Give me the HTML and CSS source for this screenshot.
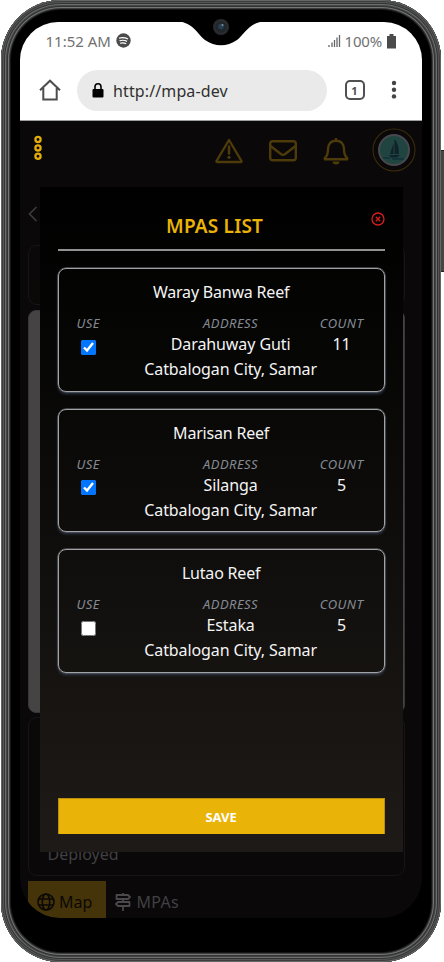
FILE: index.html
```html
<!DOCTYPE html>
<html lang="en">
<head>
<meta charset="utf-8">
<title>MPAS List</title>
<link rel="stylesheet" href="styles.css">
</head>
<body>
<div class="key"></div>
<div class="phone">
  <svg class="notch" width="94" height="25" viewBox="0 0 94 25"><path d="M0 0C19 0 23 13 31 19C41 26 53 26 63 19C71 13 75 0 94 0Z" fill="#000"/></svg>
  <svg class="camera" width="18" height="18" viewBox="0 0 18 18"><circle cx="9" cy="9" r="8" fill="#292c2e"/><circle cx="9" cy="9" r="5.5" fill="#20262b"/><circle cx="9" cy="8.5" r="2.8" fill="#264052"/><circle cx="10.5" cy="7" r="1" fill="#80929b"/></svg>
  <div class="screen">
    <header class="browser">
      <div class="status">
        <span class="time">11:52 AM</span>
        <svg class="music" width="15" height="15" viewBox="0 0 15 15"><circle cx="7.5" cy="7.5" r="7.2" fill="#4b4b4b"/><path d="M3 5.2Q7.500 3.700 12 6M3.500 7.800Q7.500 6.500 11 8.400M4 10.200Q7.300 9.200 10.200 10.700" fill="none" stroke="#fff" stroke-width="1.2"/></svg>
        <svg class="signal" width="13" height="14" viewBox="0 0 13 14"><path d="M1 11v2M4 8.500V13M6.500 6V13M9 3.500V13M11.500 1v12" stroke="#666" stroke-width="1.300"/></svg>
        <span class="percent">100%</span>
        <svg class="battery" width="11" height="15" viewBox="0 0 11 15"><path d="M3.500 0h4v2H10v12.500H1V2h2.500Z" fill="#4b4b4b"/></svg>
      </div>
      <div class="address-bar">
        <svg class="home" width="22" height="22" viewBox="0 0 22 22"><path d="M1 11.200 11 1.700l10 9.500M4.300 9v11.500h13.400V9" fill="none" stroke="#4d4d4d" stroke-width="2"/></svg>
        <div class="url"><svg width="12" height="15" viewBox="0 0 12 15"><rect x=".5" y="6" width="11" height="8.500" rx="1" fill="#000"/><path d="M3 7V3.800a3 3 0 0 1 6 0V7" fill="none" stroke="#000" stroke-width="1.600"/></svg><span>http://mpa-dev</span></div>
        <div class="tabs">1</div>
        <svg class="more" width="6" height="20" viewBox="0 0 6 20"><g fill="#444"><circle cx="3" cy="3" r="2.200"/><circle cx="3" cy="9.700" r="2.200"/><circle cx="3" cy="16.400" r="2.200"/></g></svg>
      </div>
    </header>
    <main class="app">
      <nav class="topbar">
        <svg class="menu" width="10" height="26" viewBox="0 0 10 26"><g fill="none" stroke="#e4ac08" stroke-width="2.300"><circle cx="5" cy="4.500" r="2.600"/><circle cx="5" cy="12.900" r="2.600"/><circle cx="5" cy="21.300" r="2.600"/></g></svg>
        <div class="actions">
          <svg width="28" height="26" viewBox="0 0 28 26"><path d="M14 2 1.500 23q-.3 1 .7 1h23.600q1 0 .7-1Z" fill="none" stroke="#4d3b0a" stroke-width="2.400" stroke-linejoin="round"/><path d="M14 8.500v7" stroke="#4d3b0a" stroke-width="2.500" stroke-linecap="round"/><circle cx="14" cy="19.300" r="1.600" fill="#4d3b0a"/></svg>
          <svg width="28" height="22" viewBox="0 0 28 22"><rect x="1.200" y="1.200" width="25.600" height="19" rx="2.500" fill="none" stroke="#4d3b0a" stroke-width="2.400"/><path d="m1.500 6 10.300 8q2.200 1.500 4.400 0l10.300-8" fill="none" stroke="#4d3b0a" stroke-width="2.400"/></svg>
          <svg width="26" height="28" viewBox="0 0 26 28"><path d="M13 1v3M13 3.800c-5.500 0-8 3.700-8 8.200 0 5-1.500 7.700-3.200 9.200v1h22.400v-1C22.500 19.700 21 17 21 12c0-4.500-2.500-8.200-8-8.200Z" fill="none" stroke="#4d3b0a" stroke-width="2.400" stroke-linejoin="round"/><path d="M9.500 24.500h7a3.500 3 0 0 1-7 0Z" fill="#4d3b0a"/></svg>
        </div>
        <svg class="avatar" width="44" height="44" viewBox="0 0 44 44"><circle cx="22" cy="22" r="21" fill="none" stroke="#3b2d0b" stroke-width="1.100"/><circle cx="22" cy="22" r="15" fill="#204541" stroke="#48484d" stroke-width="2"/><path d="M22.500 11v15h4.500Q27 16 22.500 11M21.500 15l-3.500 11h3.500ZM17 27h11l-3 2.500h-6Z" fill="#10232b"/><path d="M11 30h7m2 1h12" stroke="#12313d" stroke-width="1.300"/></svg>
      </nav>
      <div class="page">
        <svg class="back" width="10" height="16" viewBox="0 0 10 16"><path d="M8.500 1 1.500 8l7 7" fill="none" stroke="#3c3b3d" stroke-width="1.700"/></svg>
        <div class="panel summary"></div>
        <div class="map"></div>
        <div class="panel devices"><span>Deployed</span></div>
        <footer class="bottom">
          <div class="tab active"><svg width="18" height="18" viewBox="0 0 18 18"><g fill="none" stroke="#0c0905" stroke-width="1.600"><circle cx="9" cy="9" r="8"/><ellipse cx="9" cy="9" rx="3.700" ry="8"/><path d="M1.500 6h15m-15 6h15"/></g></svg><span>Map</span></div>
          <div class="tab"><svg width="18" height="18" viewBox="0 0 18 18"><g fill="none" stroke="#4a484a" stroke-width="1.800" stroke-linejoin="round"><path d="M9 0v2M9 6v3M9 13v5M2.500 2H14l2 2-2 2H2.500ZM15.500 9H4l-2 2 2 2h11.500Z"/></g></svg><span>MPAs</span></div>
        </footer>
      </div>
      <section class="modal">
        <div class="modal-head"><h1>MPAS LIST</h1><svg class="close" width="14" height="14" viewBox="0 0 14 14"><g fill="none" stroke="#d91d20" stroke-width="1.300"><circle cx="7" cy="7" r="6"/><path d="m4.800 4.800 4.400 4.400m0-4.400L4.800 9.200"/></g></svg></div>
        <div class="cards">
          <article class="card">
            <h2>Waray Banwa Reef</h2>
            <div class="columns">
              <label class="use"><em>USE</em><input type="checkbox" checked></label>
              <div class="address"><em>ADDRESS</em><p>Darahuway Guti</p><p>Catbalogan City, Samar</p></div>
              <div class="count"><em>COUNT</em><p>11</p></div>
            </div>
          </article>
          <article class="card">
            <h2>Marisan Reef</h2>
            <div class="columns">
              <label class="use"><em>USE</em><input type="checkbox" checked></label>
              <div class="address"><em>ADDRESS</em><p>Silanga</p><p>Catbalogan City, Samar</p></div>
              <div class="count"><em>COUNT</em><p>5</p></div>
            </div>
          </article>
          <article class="card">
            <h2>Lutao Reef</h2>
            <div class="columns">
              <label class="use"><em>USE</em><input type="checkbox"></label>
              <div class="address"><em>ADDRESS</em><p>Estaka</p><p>Catbalogan City, Samar</p></div>
              <div class="count"><em>COUNT</em><p>5</p></div>
            </div>
          </article>
        </div>
        <button class="save">SAVE</button>
      </section>
    </main>
  </div>
</div>
</body>
</html>
```
FILE: styles.css
```css
* { box-sizing: border-box; }
body { margin: 0; width: 444px; height: 962px; overflow: hidden; position: relative; background: #fff; font-family: "Noto Sans", "Open Sans", sans-serif; font-size: 16px; }
svg { display: block; flex: none; }
h1, h2, p { margin: 0; font-weight: 400; }
.key { position: absolute; left: 438px; top: 150px; width: 6px; height: 122px; background: #454546; border-top: 1px solid #222; border-bottom: 1px solid #222; }
.phone { position: relative; width: 440px; height: 962px; margin-left: 1px; padding: 22px 19px 44px 18.5px; border-radius: 60px; background: #000; box-shadow: inset 0 0 0 1px #666, inset 0 0 0 2px #3c3d3d, inset 0 0 0 3px #555, inset 0 0 0 4px #333, inset 0 0 0 5px #6c6e6e, inset 0 0 0 6px #444, inset 0 0 0 7px #333, inset 0 0 0 8px #747676, inset 0 0 0 9px #3b3b3b, inset 0 0 0 10px #151515; }
.notch { position: absolute; left: 173px; top: 21px; z-index: 3; }
.camera { position: absolute; left: 211px; top: 18px; z-index: 4; }
.screen { width: 402.5px; height: 896px; border-radius: 38px 38px 40px 40px; overflow: hidden; background: #0a0809; }
.browser { height: 99px; background: #fff; border-bottom: 1px solid #9da09f; }
.status { display: flex; align-items: center; height: 38px; margin-bottom: 1px; padding: 0 25.5px 0 26px; color: #717171; font-size: 15px; }
.time { width: 66px; margin-right: 4px; white-space: nowrap; }
.music { margin-bottom: 1px; }
.signal { margin-left: auto; }
.percent { margin-left: 4px; width: 39px; letter-spacing: -.2px; }
.battery { margin-left: 2px; }
.address-bar { display: flex; align-items: center; height: 58px; padding-left: 19px; }
.url { display: flex; align-items: center; gap: 9.5px; width: 250px; height: 41px; margin-left: 16px; padding-left: 15px; border-radius: 21px; background: #eaeaea; color: #303030; }
.url span { letter-spacing: .12px; padding-top: 1px; }
.tabs { display: flex; align-items: center; justify-content: center; width: 20px; height: 20px; margin-left: 18px; border: 2px solid #505050; border-radius: 5px; color: #505050; font-size: 11px; font-weight: 700; }
.more { margin-left: 26px; }
.app { position: relative; height: 797px; }
.topbar { display: flex; align-items: center; height: 58px; padding: 0 6.5px 0 13.5px; }
.menu { margin-bottom: 5px; }
.actions { display: flex; align-items: center; gap: 26px; margin-left: auto; margin-right: 23px; padding-top: 2px; }
.page { display: flex; flex-direction: column; padding: 27px 17px 0 8.5px; }
.back { margin-bottom: 23px; }
.panel { border: 1px solid #171517; border-radius: 9px; }
.summary { height: 60px; }
.map { height: 403px; margin: 5px 0 4px; border: 1px solid #373638; border-radius: 8px; background: #454344; }
.devices { display: flex; align-items: flex-end; height: 159px; padding: 0 18.5px 9px; color: #414042; line-height: 24px; }
.bottom { display: flex; height: 38px; margin-top: 5px; }
.tab { display: flex; align-items: center; gap: 4.5px; padding: 4px 9px 0 8.5px; color: #414042; }
.tab:last-child { letter-spacing: .3px; }
.tab.active { width: 77.5px; background: #453409; color: #0c0905; }
.modal { position: absolute; left: 20.1px; top: 66px; width: 363px; height: 665px; padding: 18px; display: flex; flex-direction: column; background: linear-gradient(#000, #060605 25%, #12100e 62%, #1e1a17); }
.modal-head { position: relative; display: flex; justify-content: center; height: 46px; border-bottom: 2px solid #929292; }
.modal-head h1 { padding-right: 13px; padding-top: 7px; line-height: 28px; font-size: 19px; font-weight: 600; color: #eab308; letter-spacing: .2px; }
.close { position: absolute; right: 0; top: 7px; }
.cards { display: flex; flex-direction: column; gap: 17px; margin-top: 17px; }
.card { height: 123.6px; padding: 10px 0 0; border: 1.500px solid #a1a3a6; border-radius: 8px; box-shadow: 0 2px 3px #46536b99, 0 0 0 .5px #77797b; color: #f4f4f4; text-align: center; }
.card h2 { font-size: 16px; line-height: 27px; letter-spacing: -.2px; }
.columns { display: grid; grid-template-columns: 86px 172px 50px; margin-top: 6px; }
.address { width: 174px; margin-left: -1px; }
.use { width: 59px; }
.columns em { display: block; height: 23px; line-height: 23px; color: #858b93; font-size: 13px; letter-spacing: .45px; }
.columns p { line-height: 25px; height: 25px; letter-spacing: -.09px; white-space: nowrap; }
.columns em + p { margin-top: -3px; }
.use input { display: block; width: 15px; height: 15px; margin: 4.500px auto 0; }
.save { display: block; height: 36px; margin-top: auto; border: 1px solid #b78d12; border-width: 1px 1px 0; background: #eab308; color: #fff; font: 700 13px "Noto Sans", sans-serif; }
```
